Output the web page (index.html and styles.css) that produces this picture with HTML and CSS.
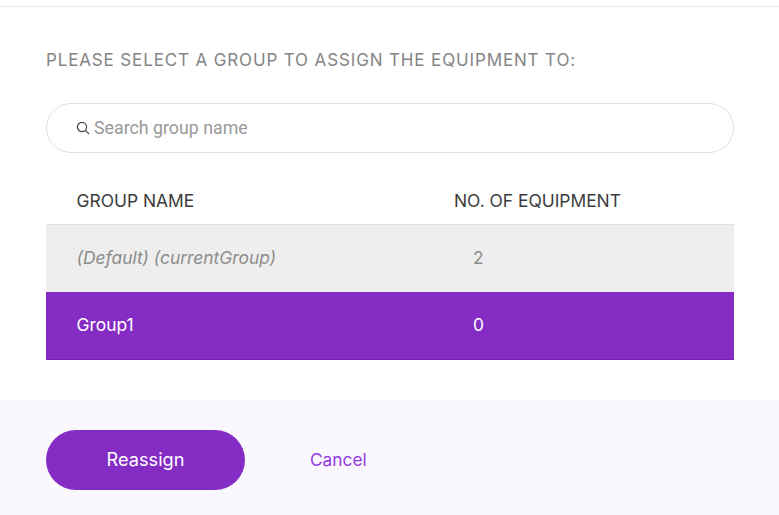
FILE: index.html
```html
<!DOCTYPE html>
<html lang="en">
	<head>
		<meta charset="UTF-8" />
		<meta name="viewport" content="width=device-width, initial-scale=1.0" />
		<title>Reassign Equipment</title>
		<link rel="stylesheet" href="styles.css">
	</head>

	<body>
		<div class="dialog-body">
			<h2 class="dialog-title">PLEASE SELECT A GROUP TO ASSIGN THE EQUIPMENT TO:</h2>
			<label class="search">
				<svg class="search-icon" viewBox="0 0 14 14" width="14" height="14" fill="none" stroke="#444" stroke-width="1.2">
					<circle cx="6" cy="6" r="4.6"></circle>
					<path d="M9.4 9.4 L13 13"></path>
				</svg>
				<input type="text" placeholder="Search group name">
			</label>
			<div class="table">
				<div class="row row-head">
					<div class="col-name">GROUP NAME</div>
					<div class="col-count">NO. OF EQUIPMENT</div>
				</div>
				<div class="row row-current">
					<div class="col-name">(Default) (currentGroup)</div>
					<div class="col-count">2</div>
				</div>
				<div class="row row-selected">
					<div class="col-name">Group1</div>
					<div class="col-count">0</div>
				</div>
			</div>
		</div>
		<div class="dialog-footer">
			<button class="btn-primary">Reassign</button>
			<a class="btn-link" href="#">Cancel</a>
		</div>
	</body>
</html>
```

FILE: styles.css
```css
html, body {
	margin: 0;
	padding: 0;
	font-family: Inter, 'Liberation Sans', sans-serif;
	background-color: #fff;
}

.dialog-body {
	height: 393px;
	margin-top: 6px;
	border-top: 1px solid #e8e8e8;
	padding: 0 45px 0 46px;
}

.dialog-title {
	margin: 0;
	padding-top: 43px;
	font-size: 17px;
	line-height: 20px;
	font-weight: 400;
	letter-spacing: 0.86px;
	color: #858585;
}

.search {
	display: flex;
	align-items: center;
	box-sizing: border-box;
	height: 50px;
	margin-top: 33px;
	padding: 0 25px 2px 29px;
	border: 1px solid #e0e0e0;
	border-radius: 25px;
}

.search-icon {
	flex: none;
	margin: 1px 4px 0 0;
}

.search input {
	flex: 1;
	min-width: 0;
	border: unset;
	outline: none;
	padding: 0;
	font-family: Roboto, sans-serif;
	font-size: 17.8px;
	color: #444;
}

.search input::placeholder {
	color: #999;
	opacity: 1;
}

.row {
	display: flex;
	align-items: center;
	height: 67px;
	padding-bottom: 2px;
	box-sizing: border-box;
	font-size: 17.4px;
}

.col-name {
	width: 408px;
	padding-left: 30.6px;
	box-sizing: border-box;
}

.col-count {
	padding-left: 19px;
}

.row-head {
	height: 72px;
	padding: 23px 0 0;
	border-bottom: 1px solid #e0e0e0;
	color: #3c3c3c;
}

.row-head .col-count {
	padding-left: 0;
}

.row-current {
	background-color: #eeeeee;
	color: #8c8c8c;
}

.row-current .col-name {
	font-style: italic;
}

.row-selected {
	height: 68px;
	background-color: #852cc5;
	border-bottom: 1px solid #7426ab;
	color: #fff;
}

.dialog-footer {
	display: flex;
	align-items: center;
	box-sizing: border-box;
	height: 115px;
	padding: 4px 0 0 46px;
	background-color: #faf7ff;
}

.btn-primary {
	width: 199px;
	height: 60px;
	padding: 0 0 2px;
	border: unset;
	border-radius: 30px;
	background-color: #852cc5;
	color: #fff;
	font-family: inherit;
	font-size: 18.2px;
}

.btn-link {
	margin-left: 65px;
	color: #9238e0;
	font-size: 17.3px;
	text-decoration: none;
}
```
